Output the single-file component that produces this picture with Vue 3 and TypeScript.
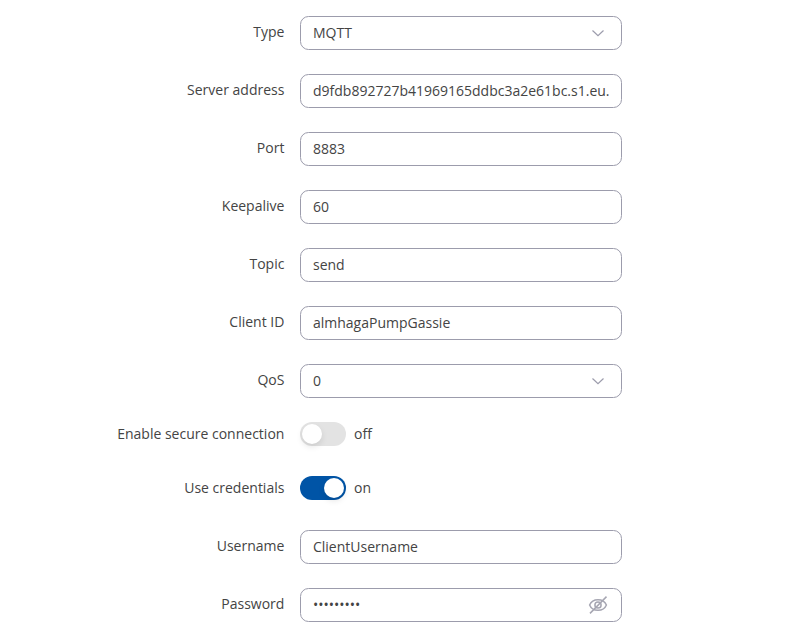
<script setup lang="ts">
interface Row {
  label: string
  kind: 'text' | 'select' | 'switch' | 'password'
  value: string
  on?: boolean
}

const rows: Row[] = [
  { label: 'Type', kind: 'select', value: 'MQTT' },
  { label: 'Server address', kind: 'text', value: 'd9fdb892727b41969165ddbc3a2e61bc.s1.eu.' },
  { label: 'Port', kind: 'text', value: '8883' },
  { label: 'Keepalive', kind: 'text', value: '60' },
  { label: 'Topic', kind: 'text', value: 'send' },
  { label: 'Client ID', kind: 'text', value: 'almhagaPumpGassie' },
  { label: 'QoS', kind: 'select', value: '0' },
  { label: 'Enable secure connection', kind: 'switch', value: 'off', on: false },
  { label: 'Use credentials', kind: 'switch', value: 'on', on: true },
  { label: 'Username', kind: 'text', value: 'ClientUsername' },
  { label: 'Password', kind: 'password', value: '•••••••••' },
]
</script>

<template>
  <form class="form">
    <div v-for="row in rows" :key="row.label" class="row" :class="row.kind">
      <label class="label">{{ row.label }}</label>
      <div v-if="row.kind === 'switch'" class="toggle">
        <span class="track" :class="{ on: row.on }"><span class="thumb"></span></span>
        <span class="state">{{ row.value }}</span>
      </div>
      <div v-else class="field">
        <span class="value">{{ row.value }}</span>
        <svg v-if="row.kind === 'select'" class="chevron" viewBox="0 0 12 8" width="12" height="8">
          <path d="M0.500 1.500L6 6.700L11.500 1.500" />
        </svg>
        <svg v-if="row.kind === 'password'" class="eye" viewBox="0 0 20 20" width="20" height="20">
          <path d="M1.600 10C4.500 2.900 15.500 2.900 18.400 10C15.500 17.100 4.500 17.100 1.600 10Z" />
          <circle cx="10" cy="10" r="3.100" />
          <path d="M2 18.400L18.500 1.600" />
        </svg>
      </div>
    </div>
  </form>
</template>

<style>
body {
  background: #fff;
}
</style>

<style scoped>
.form {
  width: 794px;
  height: 637px;
  box-sizing: border-box;
  padding-top: 16px;
  overflow: hidden;
  font: 14px/20px 'Open Sans', sans-serif;
  color: #444;
}
.row {
  display: flex;
  gap: 15.6px;
  height: 34px;
  margin-bottom: 24px;
}
.row.switch {
  height: 24px;
  margin-bottom: 30px;
}
.label {
  width: 284.4px;
  padding-top: 6px;
  text-align: right;
}
.switch .label {
  padding-top: 2px;
}
.field {
  display: flex;
  align-items: center;
  justify-content: space-between;
  box-sizing: border-box;
  width: 322px;
  height: 34px;
  padding: 0 12px;
  border: 1px solid #9c9cac;
  border-radius: 8.5px;
  white-space: nowrap;
}
.chevron {
  margin-right: 5px;
}
.eye {
  margin-right: 1px;
}
svg {
  fill: none;
  stroke: #9c9cac;
  stroke-width: 1.2;
}
.eye {
  stroke: #a6a6b2;
  stroke-width: 1.5;
}
.toggle {
  display: flex;
  align-items: center;
  gap: 8px;
}
.track {
  box-sizing: border-box;
  width: 46px;
  height: 24px;
  padding: 2px;
  border-radius: 12px;
  background: #e3e3e3;
}
.thumb {
  display: block;
  width: 20px;
  height: 20px;
  border-radius: 50%;
  background: #fff;
  box-shadow: 0 3px 6px rgba(0, 0, 0, 0.1);
}
.track.on {
  background: #0054a6;
}
.on .thumb {
  margin-left: 22px;
}
</style>
